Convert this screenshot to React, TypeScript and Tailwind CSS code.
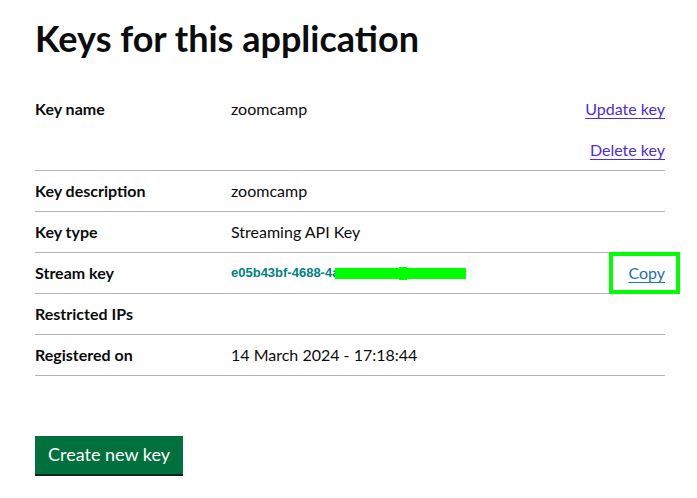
import React from "react";

type Row = {
  label: string;
  value?: React.ReactNode;
  actions?: React.ReactNode;
};

const linkClass = "text-[#4c2cde] underline underline-offset-[3px] decoration-1";

const StreamKey = () => (
  <span className="flex h-[20px] items-center">
    <span className="font-['Liberation_Sans',sans-serif] text-[13px] font-bold leading-[20px] text-[#00827f]">
      e05b43bf-4688-4a
    </span>
    <span className="relative -ml-[4px] inline-block h-[11px] w-[131px] bg-[#00ff00]">
      <span className="absolute left-[64px] -top-[1px] h-[13px] w-[8px] bg-[#00ff00]" />
    </span>
  </span>
);

const rows: Row[] = [
  {
    label: "Key name",
    value: "zoomcamp",
    actions: (
      <div className="flex flex-col items-end gap-[21px]">
        <a href="#" className={linkClass}>
          Update key
        </a>
        <a href="#" className={linkClass}>
          Delete key
        </a>
      </div>
    ),
  },
  { label: "Key description", value: "zoomcamp" },
  { label: "Key type", value: "Streaming API Key" },
  {
    label: "Stream key",
    value: <StreamKey />,
    actions: (
      <div className="h-[20px]">
        <div className="-mt-[11px] -mr-[15px] border-4 border-[#00ff00] py-[7px] pl-[15px] pr-[11px]">
          <a href="#" className="text-[#1d70b8] underline underline-offset-[3px] decoration-1">
            Copy
          </a>
        </div>
      </div>
    ),
  },
  { label: "Restricted IPs" },
  { label: "Registered on", value: "14 March 2024 - 17:18:44" },
];

export default function App() {
  return (
    <div className="min-h-[498px] bg-white px-[35px] pt-[15px] font-['Lato',sans-serif] text-[#0b0c0c]">
      <h1 className="text-[36px] font-bold leading-[46px]">Keys for this application</h1>

      <dl className="mt-[28px] w-[630px]">
        {rows.map((row) => (
          <div
            key={row.label}
            className="grid grid-cols-[196px_1fr_auto] border-b border-[#b1b4b6] py-[10px] text-[16px] leading-[20px]"
          >
            <dt className="font-bold">{row.label}</dt>
            <dd>{row.value}</dd>
            <dd className="text-right">{row.actions}</dd>
          </div>
        ))}
      </dl>

      <button className="mt-[60px] bg-[#00703c] px-[13px] pb-[7px] pt-[6px] text-[18px] leading-[25px] text-white shadow-[0_2px_0_#002d18]">
        Create new key
      </button>
    </div>
  );
}
